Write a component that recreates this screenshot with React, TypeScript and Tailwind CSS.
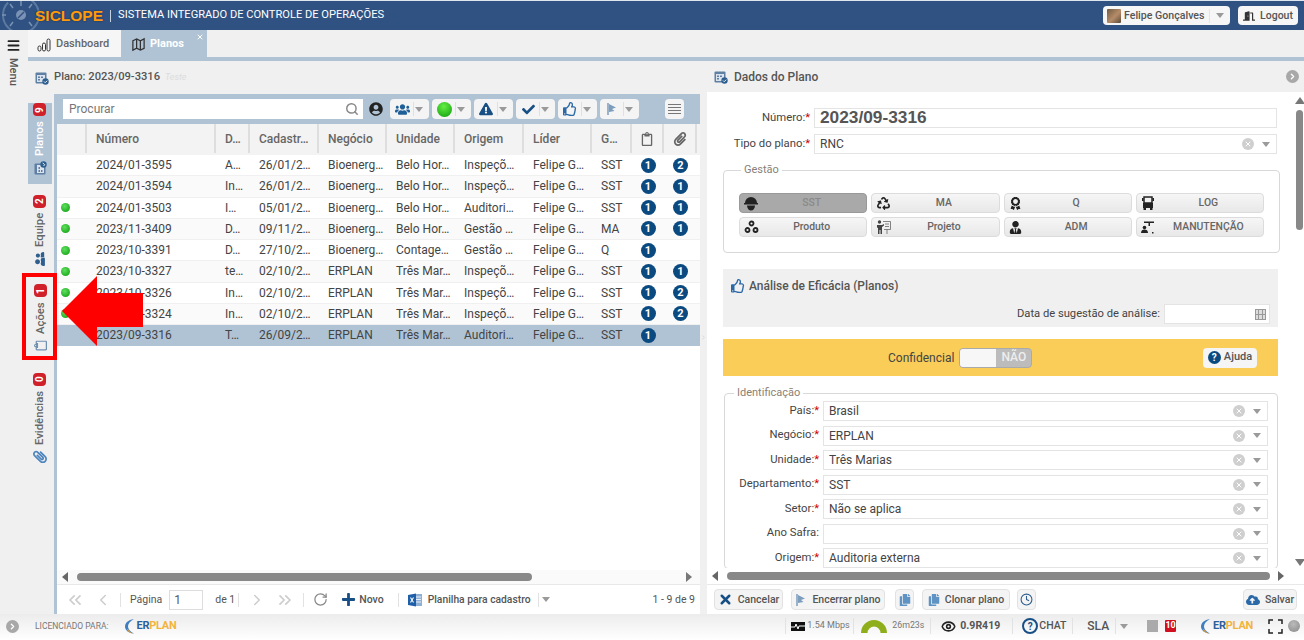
import React from "react";
import { ChevronLeft, ChevronRight, ChevronsLeft, ChevronsRight, Clock, Eye, Menu, RotateCw, Search, X } from "lucide-react";
import {
  FaAward,
  FaCheck,
  FaCloudUploadAlt,
  FaCopy,
  FaDoorOpen,
  FaExclamationTriangle,
  FaPaperclip,
  FaPlus,
  FaRecycle,
  FaRegClipboard,
  FaRegThumbsUp,
  FaUserCircle,
  FaUserTie,
  FaUsers,
  FaUserFriends,
} from "react-icons/fa";

interface Row {
  dot: boolean;
  num: string;
  d: string;
  cad: string;
  neg: string;
  uni: string;
  ori: string;
  g: string;
  a: number;
  b?: number;
  selected?: boolean;
}

const rows: Row[] = [
  { dot: false, num: "2024/01-3595", d: "A…", cad: "26/01/2…", neg: "Bioenerg…", uni: "Belo Hor…", ori: "Inspeçõ…", g: "SST", a: 1, b: 2 },
  { dot: false, num: "2024/01-3594", d: "In…", cad: "26/01/2…", neg: "Bioenerg…", uni: "Belo Hor…", ori: "Inspeçõ…", g: "SST", a: 1, b: 1 },
  { dot: true, num: "2024/01-3503", d: "I…", cad: "05/01/2…", neg: "Bioenerg…", uni: "Belo Hor…", ori: "Auditori…", g: "SST", a: 1, b: 1 },
  { dot: true, num: "2023/11-3409", d: "D…", cad: "09/11/2…", neg: "Bioenerg…", uni: "Belo Hor…", ori: "Gestão …", g: "MA", a: 1, b: 1 },
  { dot: true, num: "2023/10-3391", d: "D…", cad: "27/10/2…", neg: "Bioenerg…", uni: "Contage…", ori: "Gestão …", g: "Q", a: 1 },
  { dot: true, num: "2023/10-3327", d: "te…", cad: "02/10/2…", neg: "ERPLAN", uni: "Três Mar…", ori: "Inspeçõ…", g: "SST", a: 1, b: 1 },
  { dot: true, num: "2023/10-3326", d: "In…", cad: "02/10/2…", neg: "ERPLAN", uni: "Três Mar…", ori: "Inspeçõ…", g: "SST", a: 1, b: 2 },
  { dot: true, num: "2023/10-3324", d: "In…", cad: "02/10/2…", neg: "ERPLAN", uni: "Três Mar…", ori: "Inspeçõ…", g: "SST", a: 1, b: 2 },
  { dot: false, num: "2023/09-3316", d: "T…", cad: "26/09/2…", neg: "ERPLAN", uni: "Três Mar…", ori: "Auditori…", g: "SST", a: 1, selected: true },
];

const Caret = () => (
  <svg width="8" height="5" viewBox="0 0 8 5" className="shrink-0">
    <path d="M0 0h8L4 5z" fill="#9a9a9a" />
  </svg>
);

const Tri = ({ dir, color = "#666" }: { dir: "l" | "r" | "u" | "d"; color?: string }) => {
  const d = { l: "M7 0v10L1 5z", r: "M1 0v10l6-5z", u: "M0 8h10L5 1z", d: "M0 2h10L5 9z" }[dir];
  return (
    <svg width="10" height="10" viewBox="0 0 10 10" className="shrink-0">
      <path d={d} fill={color} />
    </svg>
  );
};

const PlanIcon = ({ size = 14 }: { size?: number }) => (
  <svg width={size} height={size} viewBox="0 0 14 14" className="shrink-0">
    <rect x="0.5" y="1.5" width="11" height="11" rx="1" fill="#5f7fa3" />
    <rect x="2" y="4" width="8" height="7" fill="#dbe4ee" />
    <rect x="3" y="5.5" width="2" height="1.5" fill="#5f7fa3" />
    <rect x="6" y="5.5" width="2" height="1.5" fill="#5f7fa3" />
    <rect x="3" y="8" width="2" height="1.5" fill="#5f7fa3" />
    <circle cx="10.5" cy="10.5" r="3.2" fill="#2f5f8f" />
    <path d="M9 10.5l1.2 1.2 2-2" stroke="#fff" strokeWidth="0.9" fill="none" />
  </svg>
);

const FlagIcon = () => (
  <svg width="12" height="14" viewBox="0 0 12 14" className="shrink-0">
    <path d="M2 1v12" stroke="#7d9dbd" strokeWidth="1.500" />
    <path d="M3 2l7 3.500L6 7l2.500 2L3 10z" fill="#7d9dbd" />
  </svg>
);

const HelmetIcon = () => (
  <svg width="14" height="15" viewBox="0 0 14 15">
    <path d="M1 7a6 6 0 0 1 12 0z" fill="#222" />
    <rect x="0" y="7" width="14" height="1.500" fill="#222" />
    <path d="M3 9.500h8C11 12.500 9 14.500 7 14.500S3 12.500 3 9.500z" fill="#222" />
  </svg>
);

const TruckFrontIcon = () => (
  <svg width="12" height="14" viewBox="0 0 12 14">
    <path d="M2 1h8v6H2z" fill="none" stroke="#222" strokeWidth="1.500" />
    <rect x="1" y="7" width="10" height="5" fill="#222" />
    <rect x="1.500" y="12" width="2.500" height="2" fill="#222" />
    <rect x="8" y="12" width="2.500" height="2" fill="#222" />
    <rect x="0" y="2" width="1.500" height="3" fill="#222" />
    <rect x="10.500" y="2" width="1.500" height="3" fill="#222" />
  </svg>
);

const GearsIcon = () => (
  <svg width="15" height="14" viewBox="0 0 15 14" fill="none" stroke="#222" strokeWidth="1.800">
    <circle cx="7.500" cy="3.500" r="2" />
    <circle cx="3.500" cy="10" r="2" />
    <circle cx="11.500" cy="10" r="2" />
  </svg>
);

const BoardIcon = () => (
  <svg width="15" height="14" viewBox="0 0 15 14">
    <circle cx="3.500" cy="2" r="1.700" fill="#444" />
    <path d="M1 5h5l2-1v1.500L6 7v7H4.500v-4h-1v4H2V7.500L1 8z" fill="#444" />
    <path d="M7 1.500h7.500v8H8M11 9.500V14M9 4h4M9 6.500h4" fill="none" stroke="#666" strokeWidth="0.800" />
  </svg>
);

const MaintIcon = () => (
  <svg width="14" height="14" viewBox="0 0 14 14">
    <path d="M3 1.500h10V3H9v3H7.500V3H3z" fill="#222" />
    <circle cx="3.500" cy="7.500" r="1.800" fill="#222" />
    <path d="M0 13c0-2.500 1.500-3.500 3.500-3.500S7 10.500 7 13z" fill="#222" />
    <rect x="11" y="12" width="1.500" height="1.500" fill="#222" />
  </svg>
);

const ExcelIcon = () => (
  <svg width="14" height="14" viewBox="0 0 14 14" className="shrink-0">
    <rect x="5" y="1" width="9" height="12" fill="#8fb0d6" />
    <path d="M7 4h6M7 6.500h6M7 9h6" stroke="#fff" strokeWidth="0.800" />
    <path d="M0 2l8-1.500v13L0 12z" fill="#1f5fa8" />
    <path d="M2.500 4.500l3 5M5.500 4.500l-3 5" stroke="#fff" strokeWidth="1.100" />
  </svg>
);

const Badge = ({ n }: { n: number }) => (
  <span className="inline-flex h-[15px] w-[15px] items-center justify-center rounded-full bg-[#0b4a80] text-[11px] font-bold leading-none text-white">
    {n}
  </span>
);

const GreenDot = () => (
  <span className="block h-[9px] w-[9px] rounded-full bg-[radial-gradient(circle_at_40%_35%,#5fe05f,#0a9a0a)]" />
);

const SplitBtn = ({ children }: { children: React.ReactNode }) => (
  <div className="flex h-[20px] w-[39px] items-center justify-between rounded-sm bg-[#f4f4f4] pl-[3px] pr-[6px]">
    <span className="flex w-[18px] justify-center">{children}</span>
    <span className="h-[14px] w-px bg-[#e0e0e0]" />
    <Caret />
  </div>
);

const SideTab = ({
  icon,
  label,
  count,
  active,
  height,
  pad,
}: {
  icon: React.ReactNode;
  label: string;
  count: number;
  active?: boolean;
  height: string;
  pad: string;
}) => (
  <div className={`flex w-[24px] justify-center ${height} ${active ? "bg-[#afc3d5]" : ""}`}>
    <div className={`flex rotate-180 items-center gap-[5px] ${pad} [writing-mode:vertical-rl]`}>
      <span className="flex rotate-90 items-center justify-center">{icon}</span>
      <span className={`text-[11.3px] font-medium leading-none ${active ? "text-white" : "text-[#666]"}`}>{label}</span>
      <span className="flex h-[13px] w-[13px] items-center justify-center rounded-sm bg-[#d0202a] text-[10px] font-bold leading-none text-white">
        <span className="[writing-mode:vertical-rl]">{count}</span>
      </span>
    </div>
  </div>
);

const ClearIcon = () => (
  <span className="flex h-[12px] w-[12px] shrink-0 items-center justify-center rounded-full bg-[#cfcfcf]">
    <X size={8} strokeWidth={3} color="#fff" />
  </span>
);

const SelectField = ({
  label,
  value,
  required,
  labelW,
  inputW,
}: {
  label: string;
  value: string;
  required?: boolean;
  labelW: string;
  inputW: string;
}) => (
  <div className="flex h-[20px] items-center gap-[4px]">
    <div className={`shrink-0 text-right text-[11.3px] text-[#444] ${labelW}`}>
      {label}:{required && <span className="text-[#c00]">*</span>}
    </div>
    <div className={`flex h-[20px] items-center border border-[#e4e4e4] pl-[5px] pr-[6px] ${inputW}`}>
      <span className="flex-1 text-[12px] text-[#444]">{value}</span>
      <ClearIcon />
      <span className="ml-[8px]">
        <Caret />
      </span>
    </div>
  </div>
);

const gestao: { label: string; icon: React.ReactNode; on?: boolean }[] = [
  { label: "SST", icon: <HelmetIcon />, on: true },
  { label: "MA", icon: <FaRecycle size={13} color="#222" /> },
  { label: "Q", icon: <FaAward size={13} color="#222" /> },
  { label: "LOG", icon: <TruckFrontIcon /> },
  { label: "Produto", icon: <GearsIcon /> },
  { label: "Projeto", icon: <BoardIcon /> },
  { label: "ADM", icon: <FaUserTie size={13} color="#222" /> },
  { label: "MANUTENÇÃO", icon: <MaintIcon /> },
];

const identificacao = [
  { label: "País", value: "Brasil", required: true },
  { label: "Negócio", value: "ERPLAN", required: true },
  { label: "Unidade", value: "Três Marias", required: true },
  { label: "Departamento", value: "SST", required: true },
  { label: "Setor", value: "Não se aplica", required: true },
  { label: "Ano Safra", value: "", required: false },
  { label: "Origem", value: "Auditoria externa", required: true },
];

const ErplanLogo = () => (
  <div className="flex items-center gap-[2px]">
    <svg width="11" height="16" viewBox="0 0 11 16">
      <path d="M10 1C4 2 1 5 1 8.500S4 15 10 15.500C6 13.500 4 11 4 8.500S6 3 10 1z" fill="#3f7fc0" />
      <path d="M4 11c1 2.500 3 4 6 4.500C6.500 15.500 4 14 3 11.500z" fill="#f0a030" />
    </svg>
    <span className="text-[11px] font-bold tracking-tight">
      <span className="text-[#2f5f9a]">ER</span>
      <span className="text-[#f3b33d]">PLAN</span>
    </span>
  </div>
);

const Divider = () => <span className="block h-[16px] w-px bg-[#e2e2e2]" />;

const FooterBtn = ({ children, className = "" }: { children: React.ReactNode; className?: string }) => (
  <div className={`flex h-[21px] items-center gap-[5px] rounded-sm border border-[#e2e2e2] bg-[#f4f4f4] text-[10.5px] font-medium text-[#555] ${className}`}>
    {children}
  </div>
);

export default function App() {
  return (
    <div className="relative flex h-[640px] w-[1304px] flex-col overflow-hidden bg-white font-['Roboto',sans-serif]">
      {/* Header */}
      <header className="flex h-[30px] shrink-0 items-center overflow-hidden border-t border-[#dfe6ee] bg-[#2f5283]">
        <svg width="46" height="30" viewBox="0 0 46 30" className="-mr-[11px] shrink-0">
          <circle cx="21" cy="14" r="18" fill="none" stroke="#5d799f" strokeWidth="2" strokeDasharray="70 8" />
          <path d="M21 0v5M6 14H2M36 14h4M10 3l3 4M32 3l-3 4M10 25l3-4M32 25l-3-4" stroke="#7a92b3" strokeWidth="1.500" />
          <circle cx="21" cy="14" r="5" fill="#7a92b3" />
          <path d="M18 17l6-6" stroke="#2f5283" strokeWidth="1.500" />
        </svg>
        <span className="font-['Liberation_Sans',sans-serif] text-[15.5px] font-bold leading-none text-[#ff9a0a] [text-shadow:0_0_2px_#1d2c44]">
          SICLOPE
        </span>
        <span className="ml-[7px] h-[12px] w-px bg-[#c5d2e2]" />
        <span className="ml-[7px] text-[11.1px] text-white">SISTEMA INTEGRADO DE CONTROLE DE OPERAÇÕES</span>
        <div className="ml-auto mr-[6px] flex items-center gap-[8px]">
          <div className="flex h-[19px] w-[127px] items-center rounded-sm bg-[#f6f6f6] pl-[4px] pr-[6px]">
            <span className="h-[14px] w-[14px] rounded-[1px] bg-[linear-gradient(135deg,#6f5a41,#b58c69_55%,#5a4a38)]" />
            <span className="ml-[3px] flex-1 text-[10.6px] font-medium text-[#555]">Felipe Gonçalves</span>
            <span className="mr-[6px] h-[14px] w-px bg-[#e4e4e4]" />
            <Caret />
          </div>
          <div className="flex h-[19px] w-[60px] items-center justify-center gap-[5px] rounded-sm bg-[#f6f6f6] text-[10.5px] font-medium text-[#555]">
            <FaDoorOpen size={12} color="#333" />
            Logout
          </div>
        </div>
      </header>

      {/* Body */}
      <div className="flex h-[584px] shrink-0">
        <aside className="flex w-[28px] shrink-0 flex-col items-center bg-[#f0f0f0] pr-[2px] pt-[8px]">
          <Menu size={15} strokeWidth={3} color="#222" />
          <span className="mt-[5px] text-[11px] font-medium leading-none text-[#555] [writing-mode:vertical-rl]">Menu</span>
        </aside>

        <div className="flex min-w-0 flex-1 flex-col">
          {/* Tabs */}
          <div className="flex h-[27px] shrink-0 bg-[#f0f0f0]">
            <div className="flex w-[93px] items-center gap-[5px] bg-[#f6f6f6] pl-[9px] pt-[2px] text-[11px] font-medium text-[#666]">
              <svg width="14" height="14" viewBox="0 0 14 14">
                <rect x="1" y="8" width="3" height="5" rx="1.500" fill="none" stroke="#333" />
                <rect x="5.500" y="5" width="3" height="8" rx="1.500" fill="none" stroke="#333" />
                <rect x="10" y="1" width="3" height="12" rx="1.500" fill="none" stroke="#333" />
              </svg>
              Dashboard
            </div>
            <div className="relative flex w-[86px] items-center gap-[4px] bg-[#afc3d5] pl-[10px] pt-[2px] text-[11px] font-bold text-white">
              <svg width="15" height="15" viewBox="0 0 24 24" fill="none" stroke="#333" strokeWidth="2">
                <path d="M3 6l6-3 6 3 6-3v15l-6 3-6-3-6 3zM9 3v15M15 6v15" />
              </svg>
              Planos
              <X size={8} strokeWidth={3} color="#fff" className="absolute right-[3px] top-[3px]" />
            </div>
          </div>
          <div className="h-[4px] shrink-0 bg-[#afc3d5]" />

          <div className="flex min-h-0 flex-1">
            {/* Left panel */}
            <section className="flex w-[672px] shrink-0 flex-col bg-[#f0f0f0]">
              <div className="flex h-[33px] shrink-0 items-center gap-[5px] pl-[7px]">
                <PlanIcon />
                <span className="text-[11.2px] font-medium text-[#555]">Plano: 2023/09-3316</span>
                <span className="text-[9px] italic text-[#dcdcdc]">Teste</span>
              </div>
              <div className="flex min-h-0 flex-1">
                <div className="flex w-[26px] shrink-0 flex-col gap-[6px] pt-[9px]">
                  <SideTab active height="h-[81px]" pad="pt-[9px]" label="Planos" count={9} icon={<PlanIcon size={14} />} />
                  <SideTab height="h-[84px]" pad="pt-[8px]" label="Equipe" count={2} icon={<FaUserFriends size={14} color="#2f5f8f" />} />
                  <SideTab height="h-[84px]" pad="pt-[12px]" label="Ações" count={1} icon={<FaRegClipboard size={13} color="#6f8fb0" />} />
                  <SideTab height="h-[100px]" pad="pt-[6px]" label="Evidências" count={0} icon={<FaPaperclip size={14} color="#4f86bf" />} />
                </div>
                <div className="w-[3px] shrink-0 bg-[#afc3d5]" />

                <div className="flex min-w-0 flex-1 flex-col bg-white">
                  {/* Toolbar */}
                  <div className="flex h-[30px] shrink-0 items-center bg-[#afc3d5] pl-[6px]">
                    <div className="flex h-[20px] w-[300px] items-center bg-white pl-[6px] pr-[4px]">
                      <span className="flex-1 text-[12px] text-[#777]">Procurar</span>
                      <Search size={14} strokeWidth={2.500} color="#888" />
                    </div>
                    <span className="ml-[6px] mr-[7px]">
                      <FaUserCircle size={14} color="#222" />
                    </span>
                    <div className="flex gap-[3px]">
                      <SplitBtn>
                        <FaUsers size={15} color="#1f5f98" />
                      </SplitBtn>
                      <SplitBtn>
                        <span className="block h-[15px] w-[15px] rounded-full bg-[radial-gradient(circle_at_45%_30%,#66ee44,#0a9a0a)]" />
                      </SplitBtn>
                      <SplitBtn>
                        <FaExclamationTriangle size={14} color="#184f85" />
                      </SplitBtn>
                      <SplitBtn>
                        <FaCheck size={13} color="#184f85" />
                      </SplitBtn>
                      <SplitBtn>
                        <FaRegThumbsUp size={14} color="#2a68a8" />
                      </SplitBtn>
                      <SplitBtn>
                        <FlagIcon />
                      </SplitBtn>
                    </div>
                    <div className="ml-[26px] flex h-[20px] w-[19px] flex-col items-center justify-center gap-[2px] rounded-sm bg-[#f4f4f4]">
                      <span className="h-px w-[13px] bg-[#777]" />
                      <span className="h-px w-[13px] bg-[#777]" />
                      <span className="h-px w-[13px] bg-[#777]" />
                      <span className="h-px w-[13px] bg-[#777]" />
                    </div>
                  </div>

                  {/* Table header */}
                  <div className="grid h-[31px] shrink-0 grid-cols-[30px_129px_34px_69px_68px_68px_69px_68px_40px_32px_33px_1fr] bg-[#f3f3f3] pb-[2px] text-[12px] font-medium text-[#666]">
                    <div className="border-r-2 border-[#dedede]" />
                    <div className="flex items-center border-r-2 border-[#dedede] pl-[9px]">Número</div>
                    <div className="flex items-center border-r-2 border-[#dedede] pl-[9px]">D…</div>
                    <div className="flex items-center border-r-2 border-[#dedede] pl-[9px]">Cadastr…</div>
                    <div className="flex items-center border-r-2 border-[#dedede] pl-[9px]">Negócio</div>
                    <div className="flex items-center border-r-2 border-[#dedede] pl-[9px]">Unidade</div>
                    <div className="flex items-center border-r-2 border-[#dedede] pl-[9px]">Origem</div>
                    <div className="flex items-center border-r-2 border-[#dedede] pl-[9px]">Líder</div>
                    <div className="flex items-center border-r-2 border-[#dedede] pl-[9px]">G…</div>
                    <div className="flex items-center justify-center border-r-2 border-[#dedede]">
                      <FaRegClipboard size={14} color="#666" />
                    </div>
                    <div className="flex items-center justify-center border-r-2 border-[#dedede]">
                      <FaPaperclip size={14} color="#666" />
                    </div>
                  </div>

                  {/* Table rows */}
                  <div className="min-h-0 flex-1">
                    {rows.map((r, i) => (
                      <div
                        key={r.num}
                        className={`grid h-[21.25px] grid-cols-[30px_129px_34px_69px_68px_68px_69px_68px_40px_32px_33px_1fr] items-center border-b text-[12px] text-[#444] ${
                          r.selected
                            ? "border-[#afc3d5] bg-[#afc3d5]"
                            : i % 2 === 1
                              ? "border-[#f0f0f0] bg-[#fafafa]"
                              : "border-[#f0f0f0] bg-white"
                        }`}
                      >
                        <div className="pl-[4px]">{r.dot && <GreenDot />}</div>
                        <div className="pl-[9px]">{r.num}</div>
                        <div className="pl-[9px]">{r.d}</div>
                        <div className="pl-[9px]">{r.cad}</div>
                        <div className="pl-[9px]">{r.neg}</div>
                        <div className="pl-[9px]">{r.uni}</div>
                        <div className="pl-[9px]">{r.ori}</div>
                        <div className="pl-[9px]">Felipe G…</div>
                        <div className="pl-[9px]">{r.g}</div>
                        <div className="flex justify-center">
                          <Badge n={r.a} />
                        </div>
                        <div className="flex justify-center">{r.b && <Badge n={r.b} />}</div>
                      </div>
                    ))}
                  </div>

                  {/* Horizontal scrollbar */}
                  <div className="flex h-[14px] shrink-0 items-center bg-[#fafafa] pl-[4px] pr-[5px]">
                    <Tri dir="l" />
                    <span className="ml-[6px] h-[8px] w-[455px] rounded-full bg-[#888]" />
                    <span className="ml-auto">
                      <Tri dir="r" color="#777" />
                    </span>
                  </div>

                  {/* Pager */}
                  <div className="flex h-[30px] shrink-0 items-center border-t border-[#e8e8e8] pl-[8px] pr-[5px] text-[10.5px] text-[#555]">
                    <ChevronsLeft size={20} color="#ccc" strokeWidth={2} />
                    <span className="ml-[9px]">
                      <ChevronLeft size={18} color="#ccc" strokeWidth={2} />
                    </span>
                    <span className="ml-[8px] h-[14px] w-px bg-[#e2e2e2]" />
                    <span className="ml-[9px]">Página</span>
                    <div className="ml-[7px] flex h-[20px] w-[34px] items-center border border-[#ddd] pl-[4px] text-[12px]">1</div>
                    <span className="ml-[12px]">de 1</span>
                    <span className="ml-[3px] h-[14px] w-px bg-[#e2e2e2]" />
                    <span className="ml-[9px]">
                      <ChevronRight size={18} color="#ccc" strokeWidth={2} />
                    </span>
                    <span className="ml-[9px]">
                      <ChevronsRight size={20} color="#ccc" strokeWidth={2} />
                    </span>
                    <span className="ml-[8px] h-[14px] w-px bg-[#e2e2e2]" />
                    <span className="ml-[9px]">
                      <RotateCw size={15} color="#888" />
                    </span>
                    <span className="ml-[13px]">
                      <FaPlus size={15} color="#184f85" />
                    </span>
                    <span className="ml-[3px] font-medium">Novo</span>
                    <span className="ml-[14px] h-[14px] w-px bg-[#e2e2e2]" />
                    <span className="ml-[9px]">
                      <ExcelIcon />
                    </span>
                    <span className="ml-[6px] text-[10.3px] font-medium">Planilha para cadastro</span>
                    <span className="ml-[7px] h-[14px] w-px bg-[#e2e2e2]" />
                    <span className="ml-[3px]">
                      <Caret />
                    </span>
                    <span className="ml-auto">1 - 9 de 9</span>
                  </div>
                </div>
              </div>
            </section>

            {/* Splitter */}
            <div className="flex w-[7px] shrink-0 items-center justify-center bg-[#f0f0f0]">
              <ChevronRight size={7} color="#ccc" />
            </div>

            {/* Right panel */}
            <section className="flex min-w-0 flex-1 flex-col bg-white">
              <div className="flex h-[31px] shrink-0 items-center gap-[6px] bg-[#f0f0f0] pl-[7px] pr-[5px]">
                <PlanIcon />
                <span className="flex-1 text-[12px] font-medium text-[#555]">Dados do Plano</span>
                <span className="flex h-[13px] w-[13px] items-center justify-center rounded-full bg-[#a8a8a8]">
                  <ChevronRight size={9} strokeWidth={3.500} color="#fff" />
                </span>
              </div>

              <div className="flex min-h-0 flex-1">
                <div className="min-w-0 flex-1 overflow-hidden pt-[16px]">
                  <div className="flex h-[20px] items-center gap-[4px]">
                    <div className="w-[103px] shrink-0 pt-[1px] text-right text-[11.3px] text-[#444]">
                      Número:<span className="text-[#c00]">*</span>
                    </div>
                    <div className="flex h-[20px] w-[463px] items-center border border-[#e4e4e4] pl-[5px] font-['Liberation_Sans',sans-serif] text-[17.3px] font-bold text-[#555]">
                      2023/09-3316
                    </div>
                  </div>
                  <div className="mt-[6px]">
                    <SelectField label="Tipo do plano" value="RNC" required labelW="w-[103px]" inputW="w-[463px]" />
                  </div>

                  <fieldset className="ml-[16px] mt-[10px] h-[89px] w-[555px] rounded-sm border border-[#d8d8d8] px-[15px] pt-[17px]">
                    <legend className="ml-[2px] px-[3px] text-[11px] leading-[12px] text-[#8a7f78]">Gestão</legend>
                    <div className="grid w-[525px] grid-cols-4 gap-x-[4px] gap-y-[4px]">
                      {gestao.map((b) => (
                        <div
                          key={b.label}
                          className={`flex h-[20px] items-center rounded-sm border pl-[3px] pr-[2px] text-[10.4px] font-medium ${
                            b.on
                              ? "border-[#999] bg-[#a9a9a9] text-[#8a8a8a]"
                              : "border-[#dcdcdc] bg-gradient-to-b from-[#f6f6f6] to-[#e8e8e8] text-[#666]"
                          }`}
                        >
                          <span className="flex w-[16px] justify-center">{b.icon}</span>
                          <span className="flex-1 text-center">{b.label}</span>
                        </div>
                      ))}
                    </div>
                  </fieldset>

                  <div className="ml-[16px] mt-[16px] h-[58px] w-[555px] bg-[#f0f0f0] pl-[8px] pr-[8px] pt-[8px]">
                    <div className="flex items-center gap-[4px] text-[12px] font-medium text-[#555]">
                      <FaRegThumbsUp size={14} color="#2a68a8" />
                      Análise de Eficácia (Planos)
                    </div>
                    <div className="mt-[9px] flex items-center justify-end gap-[4px]">
                      <span className="text-[11.2px] text-[#444]">Data de sugestão de análise:</span>
                      <div className="flex h-[20px] w-[106px] items-center justify-end border border-[#e4e4e4] bg-white pr-[3px]">
                        <span className="grid h-[11px] w-[11px] grid-cols-3 gap-px bg-[#999] p-px">
                          <span className="bg-[#ddd]" />
                          <span className="bg-[#ddd]" />
                          <span className="bg-[#ddd]" />
                          <span className="bg-[#ddd]" />
                          <span className="bg-[#ddd]" />
                          <span className="bg-[#ddd]" />
                        </span>
                      </div>
                    </div>
                  </div>

                  <div className="ml-[16px] mt-[12px] flex h-[37px] w-[555px] items-center bg-[#f9cd58] pl-[165px] pr-[21px]">
                    <span className="text-[12px] text-[#444]">Confidencial</span>
                    <div className="ml-[5px] flex h-[20px] w-[73px] overflow-hidden rounded-sm border border-[#aaa] bg-[#bcbcbc]">
                      <span className="w-[36px] bg-[#f7f7f7]" />
                      <span className="flex-1 text-center text-[12px] font-medium leading-[17px] text-[#eee]">NÃO</span>
                    </div>
                    <div className="ml-auto flex h-[20px] w-[54px] items-center justify-center gap-[3px] rounded-sm bg-[#f5f5f5] text-[11px] font-medium text-[#555]">
                      <span className="flex h-[13px] w-[13px] items-center justify-center rounded-full bg-[#0b4a80] text-[10px] font-bold text-white">?</span>
                      Ajuda
                    </div>
                  </div>

                  <fieldset className="ml-[17px] mt-[11px] w-[554px] rounded-sm border border-[#d8d8d8] pl-0 pt-[2px]">
                    <legend className="ml-[9px] px-[3px] text-[11px] leading-[12px] text-[#8a7f78]">Identificação</legend>
                    <div className="flex flex-col gap-[4.5px]">
                      {identificacao.map((f) => (
                        <SelectField
                          key={f.label}
                          label={f.label}
                          value={f.value}
                          required={f.required}
                          labelW="w-[94px]"
                          inputW="w-[445px]"
                        />
                      ))}
                    </div>
                  </fieldset>
                </div>

                {/* Vertical scrollbar */}
                <div className="flex w-[9px] shrink-0 flex-col items-center pt-[4px]">
                  <Tri dir="u" color="#777" />
                  <span className="mt-[4px] h-[120px] w-[7px] rounded-full bg-[#888]" />
                  <span className="mt-auto mb-[1px]">
                    <Tri dir="d" color="#777" />
                  </span>
                </div>
              </div>

              {/* Horizontal scrollbar */}
              <div className="flex h-[16px] shrink-0 items-center pl-[4px] pr-[17px]">
                <Tri dir="l" />
                <span className="ml-[6px] h-[8px] flex-1 rounded-full bg-[#888]" />
                <span className="ml-[7px]">
                  <Tri dir="r" />
                </span>
              </div>

              {/* Footer */}
              <div className="flex h-[30px] shrink-0 items-center border-t border-[#e8e8e8] pl-[7px] pr-[7px]">
                <FooterBtn className="w-[69px] justify-center">
                  <X size={15} strokeWidth={4} color="#184f85" />
                  Cancelar
                </FooterBtn>
                <FooterBtn className="ml-[8px] w-[94px] justify-center">
                  <FlagIcon />
                  Encerrar plano
                </FooterBtn>
                <FooterBtn className="ml-[10px] w-[19px] justify-center">
                  <FaCopy size={12} color="#5f93c4" />
                </FooterBtn>
                <FooterBtn className="ml-[8px] w-[88px] justify-center">
                  <FaCopy size={12} color="#5f93c4" />
                  Clonar plano
                </FooterBtn>
                <FooterBtn className="ml-[7px] w-[19px] justify-center">
                  <Clock size={13} color="#2f5f8f" />
                </FooterBtn>
                <FooterBtn className="ml-auto w-[54px] justify-center">
                  <FaCloudUploadAlt size={14} color="#2a68a8" />
                  Salvar
                </FooterBtn>
              </div>
            </section>
          </div>
        </div>
      </div>

      {/* Status bar */}
      <footer className="flex min-h-0 flex-1 items-center overflow-hidden bg-gradient-to-b from-[#ececec] to-white pb-[2px] pl-[6px] pr-[4px]">
        <span className="flex h-[13px] w-[13px] items-center justify-center rounded-full bg-[#a8a8a8]">
          <ChevronRight size={9} strokeWidth={3.500} color="#fff" />
        </span>
        <span className="ml-[16px] text-[8.5px] text-[#777]">LICENCIADO PARA:</span>
        <span className="ml-[15px]">
          <ErplanLogo />
        </span>
        <div className="ml-auto flex items-center">
          <Divider />
          <svg width="14" height="9" viewBox="0 0 14 9" className="ml-[5px]">
            <rect width="14" height="9" fill="#111" />
            <path d="M0 5h4l1-3 2 5 1-3h6" stroke="#fff" fill="none" />
          </svg>
          <span className="ml-[2px] w-[40px] whitespace-nowrap text-[9px] text-[#777]">1.54 Mbps</span>
          <span className="ml-[6px]">
            <Divider />
          </span>
          <svg width="26" height="13" viewBox="0 0 26 13" className="ml-[7px]">
            <path d="M3.250 13a9.750 9.750 0 0 1 19.500 0" fill="none" stroke="#8fae1b" strokeWidth="6.500" />
          </svg>
          <span className="ml-[5px] w-[32px] whitespace-nowrap text-[8.8px] text-[#777]">26m23s</span>
          <span className="ml-[6px]">
            <Divider />
          </span>
          <span className="ml-[10px]">
            <Eye size={15} color="#222" strokeWidth={2.500} />
          </span>
          <span className="ml-[4px] w-[38px] whitespace-nowrap text-[10.5px] font-bold text-[#555]">0.9R419</span>
          <span className="ml-[14px]">
            <Divider />
          </span>
          <span className="ml-[9px] flex h-[16px] w-[16px] items-center justify-center rounded-full border-2 border-[#184f85] text-[10px] font-bold text-[#184f85]">?</span>
          <span className="ml-[1px] w-[26px] text-[10.5px] font-medium text-[#555]">CHAT</span>
          <span className="ml-[7px]">
            <Divider />
          </span>
          <span className="ml-[14px] text-[12px] font-medium text-[#555]">SLA</span>
          <span className="ml-[6px]">
            <Divider />
          </span>
          <span className="ml-[4px]">
            <Caret />
          </span>
          <span className="ml-[19px] h-[12px] w-[11px] bg-[#aaa]" />
          <span className="ml-[7px] flex h-[12px] w-[11px] items-center justify-center rounded-[1px] bg-[#d01020] text-[9px] font-bold text-white">10</span>
          <span className="ml-[24px]">
            <ErplanLogo />
          </span>
          <svg width="15" height="15" viewBox="0 0 15 15" className="ml-[15px]">
            <path d="M1 5V1h4M10 1h4v4M14 10v4h-4M5 14H1v-4" fill="none" stroke="#222" strokeWidth="1.500" />
          </svg>
          <span className="ml-[5px] h-[12px] w-[12px] rounded-full bg-[radial-gradient(circle_at_45%_35%,#bbb,#888)]" />
        </div>
      </footer>

      {/* Annotation over the screenshot */}
      <div className="pointer-events-none absolute left-[22px] top-[273px] h-[87px] w-[35px] border-[4px] border-[#ff0000]" />
      <svg width="82" height="70" viewBox="0 0 82 70" className="pointer-events-none absolute left-[62px] top-[276px]">
        <path d="M0 35L35 0V17H81V51H35V70z" fill="#ff0000" />
      </svg>
    </div>
  );
}
